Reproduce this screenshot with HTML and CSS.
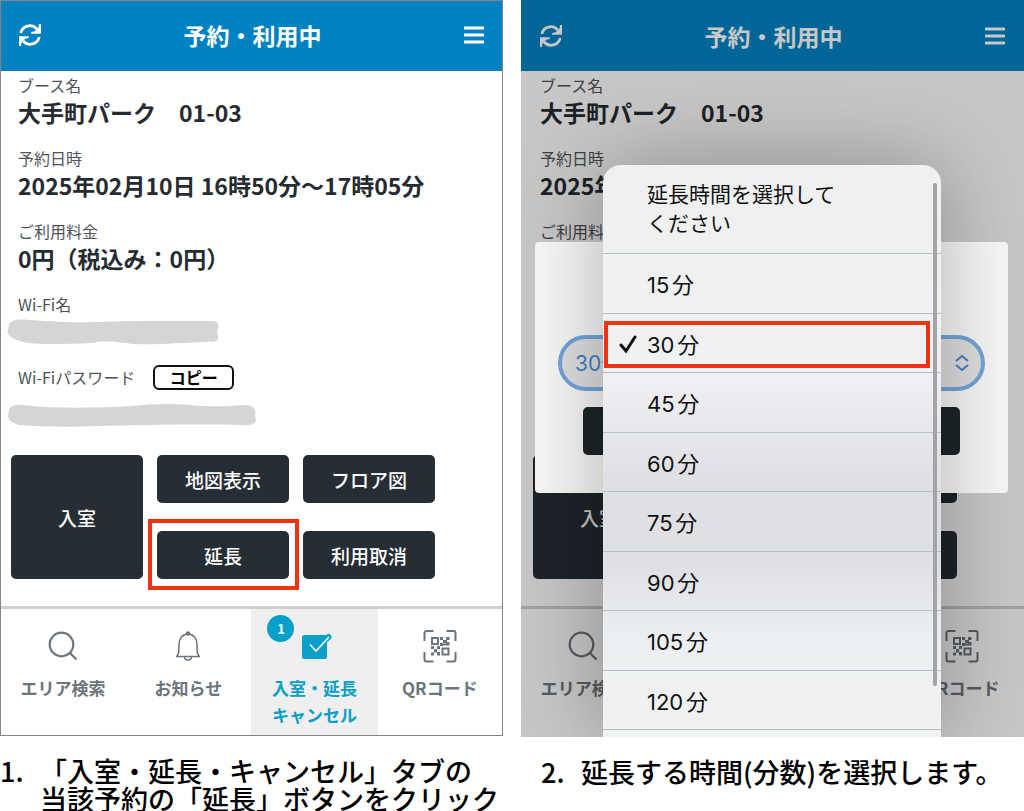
FILE: index.html
```html
<!DOCTYPE html>
<html lang="ja">
<head>
    <meta charset="UTF-8">
    <meta name="viewport" content="width=device-width, initial-scale=1.0">
    <title>予約・利用中</title>
    <link rel="stylesheet" href="styles.css">
</head>
<body>
    <!-- shared icons -->
    <svg class="sprite" aria-hidden="true">
        <symbol id="icon-refresh" viewBox="0 0 22 22">
            <path d="M1.800 9a9.200 9.200 0 0 1 16-4" fill="none" stroke="currentColor" stroke-width="2.800"/>
            <path d="M22 0v9.800h-9.800v-1.800l3.500-.8 4-4.200.3-3z" fill="currentColor"/>
            <path d="M20.200 13a9.200 9.200 0 0 1-16 4" fill="none" stroke="currentColor" stroke-width="2.800"/>
            <path d="M0 22v-9.800h9.800v1.800l-3.500.8-4 4.200-.3 3z" fill="currentColor"/>
        </symbol>
        <symbol id="icon-menu" viewBox="0 0 20 18">
            <path d="M0 2h20M0 9h20M0 16h20" stroke="currentColor" stroke-width="3"/>
        </symbol>
        <symbol id="icon-search" viewBox="0 0 36 36">
            <circle cx="16.500" cy="16.500" r="11.800" fill="none" stroke="currentColor" stroke-width="2.200"/>
            <path d="M25 25l6.500 6.500" stroke="currentColor" stroke-width="2.200"/>
        </symbol>
        <symbol id="icon-bell" viewBox="0 0 36 36">
            <path d="M6.500 28.500c2.500-2 2.500-5 2.500-12 0-6 3.500-10.500 9-10.500s9 4.500 9 10.500c0 7 0 10 2.500 12z" fill="none" stroke="currentColor" stroke-width="1.500" stroke-linejoin="round"/>
            <circle cx="18" cy="5.500" r="2.200" fill="currentColor"/>
            <path d="M14.500 29a3.500 3 0 0 0 7 0" fill="none" stroke="currentColor" stroke-width="1.500"/>
        </symbol>
        <symbol id="icon-check" viewBox="0 0 36 36">
            <rect x="5" y="7" width="25" height="24" rx="2.500" fill="currentColor"/>
            <path d="M26 14l5.500-5" stroke="currentColor" stroke-width="6" stroke-linecap="round"/>
            <path d="M13 16.500l6 6.500 13-14" fill="none" stroke="#fff" stroke-width="1.600"/>
        </symbol>
        <symbol id="icon-qr" viewBox="0 0 36 36">
            <path d="M2.500 13V5a2 2 0 0 1 2-2h7M24.500 3h7a2 2 0 0 1 2 2v8M33.500 24v7.500a2 2 0 0 1-2 2h-7M11.500 33.500h-7a2 2 0 0 1-2-2V24" fill="none" stroke="currentColor" stroke-width="2"/>
            <path d="M10 10h6v6h-6zM20.500 20.500h6v6h-6z" fill="none" stroke="currentColor" stroke-width="2"/>
            <path d="M18 9h3v3h-3zM24 9h3.500v3H24zM21 12h4v3h-4zM18 15h3v3h-3zM24 14h3.500v3.500H20v-2h4zM9 18h3v3H9zM15 18h3v3h-3zM12 21h3v3.500h-3zM9 24.500h3v3H9zM15 24h3v3.500h-3z" fill="currentColor"/>
        </symbol>
    </svg>

    <main class="guide">
        <figure class="step">
            <div class="phone">
                <header class="topbar">
                    <button class="icon-button" aria-label="更新"><svg class="icon-refresh"><use href="#icon-refresh"/></svg></button>
                    <h1>予約・利用中</h1>
                    <button class="icon-button" aria-label="メニュー"><svg class="icon-menu"><use href="#icon-menu"/></svg></button>
                </header>
                <section class="booking">
                    <dl class="details">
                        <div class="detail">
                            <dt>ブース名</dt>
                            <dd>大手町パーク　01-03</dd>
                        </div>
                        <div class="detail">
                            <dt>予約日時</dt>
                            <dd>2025年02月10日 16時50分～17時05分</dd>
                        </div>
                        <div class="detail">
                            <dt>ご利用料金</dt>
                            <dd>0円（税込み：0円）</dd>
                        </div>
                        <div class="detail">
                            <dt>Wi-Fi名</dt>
                            <dd>
                                <svg class="masked" width="212" height="28" viewBox="0 0 212 28"><path d="M2 6Q5 1 16 1.500C40 3 60 5 90 4Q150 2 206 3Q212 4 211.500 10Q209 14 211.500 19Q210 25 203 23.500C170 25 150 27 125 26C105 23 95 23 85 25Q40 27 22 25Q4 22 .5 15Q1 12 2 6z"/></svg>
                            </dd>
                        </div>
                        <div class="detail">
                            <dt>Wi-Fiパスワード <button class="copy">コピー</button></dt>
                            <dd>
                                <svg class="masked masked-password" width="250" height="26" viewBox="0 0 250 26"><path d="M2 6Q6 1 14 2C50 6 90 5 125 3Q160-1 195 3Q220 4 238 2Q248 2 248.500 10Q247 14 249.500 17Q247 23 238 22C190 21 130 22 90 23Q50 25 12 22Q1 19 1 13z"/></svg>
                            </dd>
                        </div>
                    </dl>
                    <div class="actions">
                        <button class="enter">入室</button>
                        <button>地図表示</button>
                        <button>フロア図</button>
                        <button class="marked">延長</button>
                        <button>利用取消</button>
                    </div>
                </section>
                <nav class="tabs">
                    <a href="#"><svg><use href="#icon-search"/></svg>エリア検索</a>
                    <a href="#"><svg><use href="#icon-bell"/></svg>お知らせ</a>
                    <a href="#" class="active"><span class="badge">1</span><svg><use href="#icon-check"/></svg>入室・延長<br>キャンセル</a>
                    <a href="#"><svg><use href="#icon-qr"/></svg>QRコード</a>
                </nav>
            </div>
            <figcaption><span class="number">1.</span><span>「入室・延長・キャンセル」タブの<br>当該予約の「延長」ボタンをクリック</span></figcaption>
        </figure>

        <figure class="step">
            <div class="phone phone-dimmed">
                <header class="topbar">
                    <button class="icon-button" aria-label="更新"><svg class="icon-refresh"><use href="#icon-refresh"/></svg></button>
                    <h2>予約・利用中</h2>
                    <button class="icon-button" aria-label="メニュー"><svg class="icon-menu"><use href="#icon-menu"/></svg></button>
                </header>
                <section class="booking">
                    <dl class="details">
                        <div class="detail">
                            <dt>ブース名</dt>
                            <dd>大手町パーク　01-03</dd>
                        </div>
                        <div class="detail">
                            <dt>予約日時</dt>
                            <dd>2025年</dd>
                        </div>
                        <div class="detail">
                            <dt>ご利用料金</dt>
                        </div>
                    </dl>
                    <div class="actions">
                        <button class="enter">入室</button>
                        <button></button>
                        <button></button>
                        <button></button>
                        <button></button>
                    </div>
                </section>
                <nav class="tabs">
                    <a href="#"><svg><use href="#icon-search"/></svg>エリア検索</a>
                    <a href="#"></a>
                    <a href="#"></a>
                    <a href="#"><svg><use href="#icon-qr"/></svg>QRコード</a>
                </nav>

                <div class="overlay"></div>
                <div class="dialog">
                    <div class="select-box">
                        <select aria-label="延長時間">
                            <option>30分</option>
                        </select>
                        <svg width="16" height="18" viewBox="0 0 16 18"><path d="M2 7l6-5 6 5M2 11l6 5 6-5"/></svg>
                    </div>
                    <button class="dialog-button" aria-label="延長"></button>
                </div>
                <div class="picker">
                    <p class="picker-title">延長時間を選択して<br>ください</p>
                    <ul>
                        <li><button>15分</button></li>
                        <li class="chosen"><button><svg width="18" height="18" viewBox="0 0 18 18"><path d="M2 10l5 6 9-14"/></svg>30分</button></li>
                        <li><button>45分</button></li>
                        <li><button>60分</button></li>
                        <li><button>75分</button></li>
                        <li><button>90分</button></li>
                        <li><button>105分</button></li>
                        <li><button>120分</button></li>
                    </ul>
                    <div class="scrollbar"></div>
                </div>
            </div>
            <figcaption><span class="number">2.</span><span>延長する時間(分数)を選択します。</span></figcaption>
        </figure>
    </main>
</body>
</html>
```
FILE: styles.css
```css
* {
    box-sizing: border-box;
}

body {
    margin: 0;
    height: 100vh;
    overflow: hidden;
    background-color: #fff;
    color: #262b31;
    font-family: "Noto Sans CJK JP", sans-serif;
}

button {
    padding: 0;
    border: none;
    font-family: inherit;
    cursor: pointer;
}

.sprite {
    display: none;
}

.guide {
    display: grid;
    grid-template-columns: 1fr 1fr;
    gap: 18px;
}

.step {
    margin: 0;
    min-width: 0;
}

.phone {
    position: relative;
    overflow: hidden;
    border: 1px solid #858585;
    background-color: #fff;
}

.phone-dimmed {
    border: none;
}

/* header */
.topbar {
    display: flex;
    align-items: center;
    justify-content: space-between;
    height: 70px;
    padding: 0 18px 2px;
    background-color: #0082c2;
    color: #fff;
}

.phone-dimmed .topbar {
    height: 71px;
    padding: 0 19px 0;
}

.topbar h1,
.topbar h2 {
    margin: 0;
    font-size: 23px;
    line-height: 30px;
    font-weight: 700;
}

.icon-button {
    display: flex;
    background: none;
    color: inherit;
}

.icon-refresh {
    width: 22px;
    height: 22px;
}

.icon-menu {
    width: 20px;
    height: 18px;
}

/* booking */
.booking {
    padding: 2px 10px 27px;
}

.phone-dimmed .booking {
    padding-left: 12px;
}

.details {
    display: flex;
    flex-direction: column;
    gap: 19px;
    margin: 0 7px 26px;
}

.detail dt {
    display: flex;
    align-items: center;
    gap: 18px;
    height: 24px;
    font-size: 16px;
    color: #4f5358;
}

.detail dd {
    display: flow-root;
    min-height: 30px;
    margin: 0;
    font-size: 23px;
    line-height: 30px;
    font-weight: 700;
}

.phone-dimmed .details {
    min-height: 356px;
}

.masked {
    display: block;
    margin: 2px 0 0 -11px;
    fill: #d5d5d5;
}

.masked-password {
    margin-top: 14px;
}

.copy {
    width: 81px;
    height: 25px;
    border: 2px solid #111;
    border-radius: 6px;
    background-color: #fff;
    color: #000;
    font-size: 16px;
    line-height: 20px;
    font-weight: 700;
}

.actions {
    display: grid;
    grid-template-columns: repeat(3, 132px);
    grid-auto-rows: 48px;
    gap: 28px 14px;
}

.actions button {
    position: relative;
    border-radius: 5px;
    background-color: #262d35;
    color: #fff;
    font-size: 19px;
    font-weight: 500;
}

.actions .enter {
    grid-row: span 2;
}

/* red frame round the button to press */
.marked::after {
    content: "";
    position: absolute;
    inset: -12px -10px -11px -9px;
    border: 4px solid #ee3311;
}

/* bottom tabs */
.tabs {
    display: grid;
    grid-template-columns: 62fr 63fr 63fr 62fr;
    height: 129px;
    border-top: 3px solid #cfd1d1;
}

.phone-dimmed .tabs {
    height: 131px;
}

.tabs a {
    position: relative;
    display: flex;
    flex-direction: column;
    align-items: center;
    padding-top: 19px;
    color: #6c757d;
    font-size: 17px;
    line-height: 27px;
    font-weight: 700;
    text-align: center;
    text-decoration: none;
}

.tabs svg {
    width: 36px;
    height: 36px;
    margin-bottom: 10px;
}

.tabs .active {
    background-color: #efefef;
    color: #089fc8;
}

.badge {
    position: absolute;
    top: 6px;
    left: 16px;
    width: 27px;
    height: 27px;
    border-radius: 50%;
    background-color: #089fc8;
    color: #fff;
    font-size: 13px;
}

/* extension dialog */
.overlay {
    position: absolute;
    inset: 0;
    background-color: rgba(0, 0, 0, 0.22);
}

.dialog {
    position: absolute;
    top: 242px;
    left: 14px;
    right: 16px;
    height: 251px;
    padding: 93px 23px 0;
    border-radius: 4px;
    background-color: #f8f8f6;
}

.select-box {
    position: relative;
}

.select-box select {
    display: block;
    width: 100%;
    height: 56px;
    padding: 0 13px;
    border: 4px solid #74a5dc;
    border-radius: 28px;
    background-color: #e0e0e2;
    color: #3f83c8;
    font-family: Inter, "Noto Sans CJK JP", sans-serif;
    font-size: 21px;
    appearance: none;
}

.select-box svg {
    position: absolute;
    top: 19px;
    right: 15px;
    fill: none;
    stroke: #3f83c8;
    stroke-width: 2;
}

.dialog-button {
    display: block;
    width: calc(100% - 50px);
    height: 48px;
    margin: 16px auto 0;
    border-radius: 5px;
    background-color: #1d2529;
}

/* time picker */
.picker {
    position: absolute;
    top: 165px;
    bottom: 0;
    left: 82px;
    right: 83px;
    display: flex;
    flex-direction: column;
    border-radius: 18px 18px 0 0;
    background: linear-gradient(#eff1f0 0, #f0f1f3 36%, #dfe0e3 55%, #dfe0e3 70%, #eceff1 82%, #f1f2f2 100%);
    box-shadow: 0 0 90px rgba(0, 0, 0, 0.3);
    color: #111;
    font-family: Inter, "Noto Sans CJK JP", sans-serif;
    text-autospace: normal;
}

.picker-title {
    height: 89px;
    margin: 0;
    padding: 15px 44px 0;
    border-bottom: 1px solid #bcc0c2;
    font-size: 21px;
    line-height: 29px;
}

.picker ul {
    flex: 1;
    display: flex;
    flex-direction: column;
    margin: 0;
    padding: 0 0 7px;
    list-style: none;
}

.picker li {
    position: relative;
    flex: 1;
    border-bottom: 1px solid #bcc0c2;
}

.picker li button {
    width: 100%;
    height: 100%;
    padding: 0 44px;
    background: none;
    color: inherit;
    font-size: 22px;
    text-align: left;
}

.picker li svg {
    position: absolute;
    top: 21px;
    left: 16px;
    fill: none;
    stroke: #111;
    stroke-width: 3;
    stroke-linecap: round;
}

.chosen::after {
    content: "";
    position: absolute;
    inset: 7px 11px 4px 1px;
    border: 4px solid #ee3311;
}

.scrollbar {
    position: absolute;
    top: 18px;
    right: 4px;
    width: 4px;
    height: 503px;
    border-radius: 2px;
    background-color: #a2a4a7;
}

/* captions */
figcaption {
    display: flex;
    margin-top: 21px;
    color: #000;
    font-size: 27px;
    line-height: 28px;
    font-weight: 500;
    white-space: nowrap;
}

.phone-dimmed + figcaption {
    padding-left: 20px;
}

.number {
    width: 40px;
}
```
